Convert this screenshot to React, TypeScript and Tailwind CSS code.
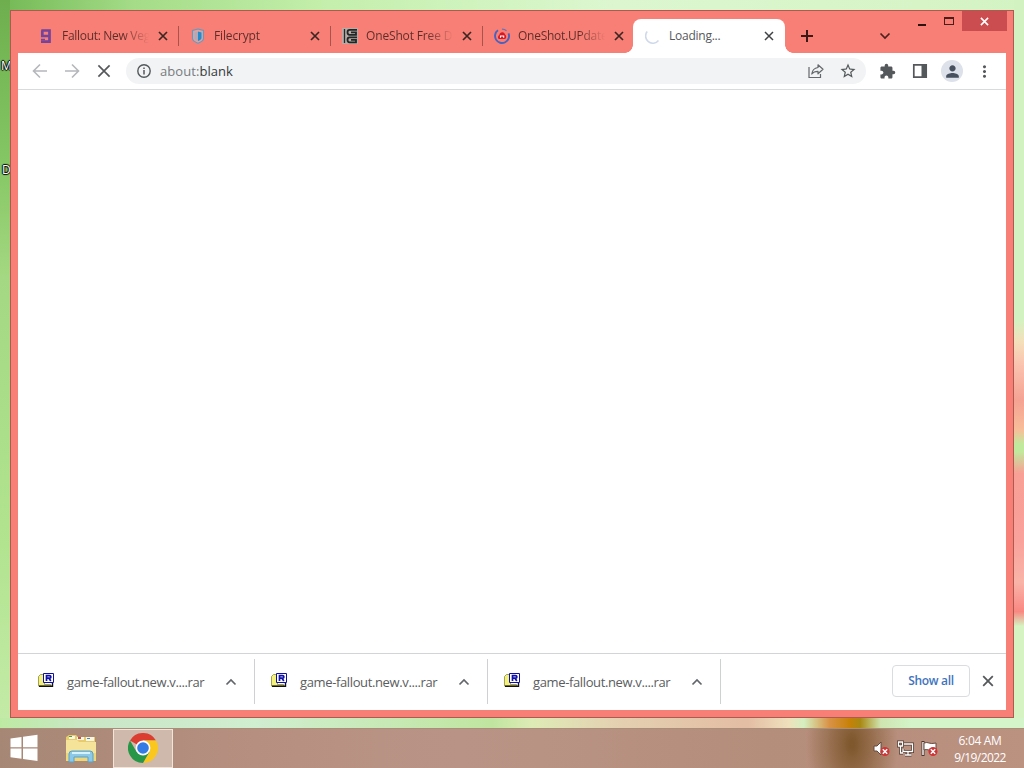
import type { ReactNode } from 'react'
import { MdExtension, MdPerson, MdMoreVert, MdStarBorder } from 'react-icons/md'

// ── Data ──

const TABS = [
  { title: 'Fallout: New Vegas', icon: <PurpleNineIcon />, tracking: 'tracking-[-0.3px]' },
  { title: 'Filecrypt', icon: <ShieldIcon />, tracking: 'tracking-[-0.15px]' },
  { title: 'OneShot Free Download', icon: <SteamGridIcon />, tracking: 'tracking-[-0.15px]' },
  { title: 'OneShot.UPdate.rar', icon: <UploadIcon />, tracking: 'tracking-[-0.25px]' },
]

const DOWNLOADS = ['game-fallout.new.v....rar', 'game-fallout.new.v....rar', 'game-fallout.new.v....rar']

// ── Favicons ──

function PurpleNineIcon() {
  return (
    <svg width="16" height="16" viewBox="0 0 16 16" className="block">
      <path d="M3.300 2.500H11.500V13.700H3M4.300 2.500V8H11.500" fill="none" stroke="#74439c" strokeWidth="2.700" />
      <path d="M3 11.500h4" fill="none" stroke="#74439c" strokeWidth="1.500" />
    </svg>
  )
}

function ShieldIcon() {
  return (
    <svg width="16" height="16" viewBox="0 0 16 16" className="block">
      <path d="M8 1 13.500 2.500v8C13.500 12.500 10.500 14.300 8 15.300 5.500 14.300 2.500 12.500 2.500 10.500v-8z" fill="#d9a3a1" stroke="#6798c0" strokeWidth="1.100" />
      <path d="M8 3.500 11.500 4.500v5.500c0 1.300-1.800 2.200-3.500 3z" fill="#218bd0" />
      <path d="M8 3.500 4.500 4.500v5.500c0 1.300 1.800 2.200 3.500 3z" fill="#b3a8b5" />
    </svg>
  )
}

function SteamGridIcon() {
  return (
    <svg width="16" height="16" viewBox="0 0 16 16" className="block">
      <path d="M0 0h16v16H0z" fill="#b9aaa5" />
      <path d="M2.500 1v14" stroke="#252b2b" strokeWidth="1.300" />
      <path d="M15 1.800H7.500Q5.500 1.800 5.500 4.300T7.500 6.800H14V4.300H9M15 9.300H7.500Q5.500 9.300 5.500 11.800t2 2.500H14V11.800H9" fill="none" stroke="#202626" strokeWidth="1.800" />
    </svg>
  )
}

function UploadIcon() {
  return (
    <svg width="16" height="16" viewBox="0 0 16 16" className="block">
      <path d="M4 2.300a7 7 0 1 0 10.500 3" fill="none" stroke="#4a62bd" strokeWidth="1.900" />
      <path d="M8 1.200a7 7 0 0 1 4.500 1.600" fill="none" stroke="#6372bd" strokeWidth="1.300" />
      <path d="M8.300 4.200c1.800 0 2.300 1.300 2.800 2.200 1.500.7 1.500 4.400-.5 4.600H5.500C3.500 10.800 3.600 7.800 5.300 6.900c.4-1.800 1.200-2.700 3-2.700z" fill="#d71925" />
      <path d="M6.500 9.700V8h3.200v1.700" fill="none" stroke="#fff" strokeWidth="1.100" />
    </svg>
  )
}

function SpinnerIcon() {
  return (
    <svg width="16" height="16" viewBox="0 0 16 16" className="block">
      <path d="M2.200 3.500A7 7 0 0 0 13.500 12.500" fill="none" stroke="#cfd9ea" strokeWidth="1.600" />
    </svg>
  )
}

// ── Small glyphs ──

function Cross({ size = 10, color = '#3c2523', weight = 1.7 }: { size?: number; color?: string; weight?: number }) {
  return (
    <svg width={size} height={size} viewBox="0 0 10 10" className="block shrink-0">
      <path d="M1 1l8 8M9 1l-8 8" stroke={color} strokeWidth={weight} fill="none" />
    </svg>
  )
}

function Arrow({ flip = false }: { flip?: boolean }) {
  return (
    <svg width="16" height="16" viewBox="0 0 16 16" className={flip ? 'block rotate-180' : 'block'}>
      <path d="M15 8H2M8 1.500 1.500 8 8 14.500" fill="none" stroke="#b5b7ba" strokeWidth="1.600" />
    </svg>
  )
}

function Chevron({ up = false, color }: { up?: boolean; color: string }) {
  return (
    <svg width="12" height="8" viewBox="0 0 12 8" className={up ? 'block rotate-180' : 'block'}>
      <path d="M1.500 1.500 6 6l4.500-4.500" fill="none" stroke={color} strokeWidth="1.700" />
    </svg>
  )
}

function RarIcon() {
  return (
    <svg width="16" height="16" viewBox="0 0 16 16" className="block shrink-0">
      <path d="M.5 4.500 2.500 2.500h4v10h6V14H.5z" fill="#f4f17c" stroke="#8a8a3c" strokeWidth=".8" />
      <path d="M1 14.200h13.500V11" fill="none" stroke="#111" strokeWidth="1.400" />
      <path d="M5.500 1.500h10v9h-10z" fill="#fff" stroke="#1010a0" strokeWidth="1" />
      <path d="M8.500 9V3.600h2.900q1.500 0 1.500 1.300t-1.500 1.300H8.500M11 6.300l1.800 2.700" fill="none" stroke="#1010b0" strokeWidth="1.700" />
    </svg>
  )
}

// ── Tab strip ──

function Tab({ title, icon, tracking }: { title: string; icon: ReactNode; tracking: string }) {
  return (
    <div className="flex h-[34px] w-[152px] shrink-0 items-center pl-[11px]">
      <div className="w-4 shrink-0">{icon}</div>
      <div className={`ml-2 w-[87px] overflow-hidden whitespace-nowrap bg-linear-to-r from-[#5c2c29] from-70% to-[#5c2c2900] bg-clip-text text-[12px] leading-5 text-transparent ${tracking}`}>
        {title}
      </div>
      <div className="ml-[9px]"><Cross /></div>
      <div className="ml-auto h-5 w-px bg-[#a9534d]" />
    </div>
  )
}

function TabStrip() {
  return (
    <div className="flex h-[42px] items-end pl-[9px]">
      {TABS.map((t, i) => (
        <div key={t.title} className={i === 3 ? 'w-[150px] shrink-0 overflow-hidden' : 'shrink-0'}>
          <Tab {...t} />
        </div>
      ))}
      <div className="relative flex h-[34px] w-[152px] shrink-0 items-center rounded-t-lg bg-white pl-3">
        <div className="absolute bottom-0 -left-2 size-2 bg-[radial-gradient(circle_at_0_0,#f77f75_7.5px,#fff_8px)]" />
        <div className="absolute -right-2 bottom-0 size-2 bg-[radial-gradient(circle_at_100%_0,#f77f75_7.5px,#fff_8px)]" />
        <SpinnerIcon />
        <span className="ml-2 w-[87px] text-[12px] leading-5 tracking-[-0.25px] text-[#55585b]">Loading...</span>
        <div className="ml-2"><Cross color="#3f4144" weight={1.500} /></div>
      </div>
      <div className="ml-[15px] flex h-[34px] items-center">
        <svg width="14" height="14" viewBox="0 0 14 14"><path d="M7 1v12M1 7h12" stroke="#3c1715" strokeWidth="2" /></svg>
      </div>
      <div className="ml-[65px] flex h-[34px] items-center"><Chevron color="#4f211e" /></div>
      <div className="-mr-px ml-auto flex self-start">
        <div className="flex h-5 w-[26px] items-end justify-center pb-[5px]"><div className="h-0.5 w-2 bg-[#2d1210]" /></div>
        <div className="flex h-5 w-[27px] items-center justify-center"><div className="h-2 w-[10px] border border-t-2 border-[#4a1d1a]" /></div>
        <div className="flex h-5 w-[45px] items-center justify-center bg-[#cb4d50]"><Cross size={9} color="#fff" weight={1.700} /></div>
      </div>
    </div>
  )
}

// ── Toolbar ──

function Toolbar() {
  return (
    <div className="flex h-[37px] shrink-0 items-center border-b border-[#d9dadb]">
      <div className="ml-[14px]"><Arrow /></div>
      <div className="ml-4"><Arrow flip /></div>
      <div className="ml-[17px]"><Cross size={14} color="#55585b" weight={1.200} /></div>
      <div className="ml-[15px] flex h-[26px] w-[740px] items-center rounded-full bg-[#f1f3f4] pr-[9px] pl-[11px]">
        <svg width="14" height="14" viewBox="0 0 14 14">
          <circle cx="7" cy="7" r="6.200" fill="none" stroke="#55585b" strokeWidth="1.400" />
          <path d="M7 6v4.500M7 3.500V5" stroke="#55585b" strokeWidth="1.500" />
        </svg>
        <span className="ml-[9px] text-[13px] leading-5 tracking-[0.06px] text-[#777b80]">about:<span className="text-[#36393c]">blank</span></span>
        <svg className="ml-auto" width="16" height="16" viewBox="0 0 16 16" fill="none" stroke="#64676b" strokeWidth="1.200">
          <path d="M1 4v10.500h11.500V11" />
          <path d="M10 1.800 15 6.300l-5 4.500V8.300C7 8.300 5.200 9 3.800 11c.4-3.200 2.500-6 6.200-6.500z" strokeLinejoin="round" />
        </svg>
        <MdStarBorder className="ml-[15px]" size={18} color="#55585b" />
      </div>
      <MdExtension className="ml-[13px]" size={17} color="#55585b" />
      <svg className="ml-4" width="16" height="16" viewBox="0 0 16 16">
        <path d="M1.800 1.800h12.400v12.400H1.800z" fill="none" stroke="#55585b" strokeWidth="1.700" />
        <path d="M9.500 1h5.500v14H9.500z" fill="#55585b" />
      </svg>
      <div className="ml-[13px] flex size-[22px] items-center justify-center rounded-full bg-[#dde1e9]"><MdPerson size={19} color="#47505f" /></div>
      <MdMoreVert className="ml-3" size={19} color="#55585b" />
    </div>
  )
}

// ── Download shelf ──

function DownloadShelf() {
  return (
    <div className="flex h-[57px] shrink-0 items-center border-t border-[#d3d4d5]">
      {DOWNLOADS.map((name, i) => (
        <div key={i} className={`-mt-px flex h-[45px] items-center border-r border-[#cfd0d1] ${i === 0 ? 'w-[237px] pl-5' : 'w-[233px] pl-4'}`}>
          <div className="-mt-1"><RarIcon /></div>
          <span className="mt-px ml-[13px] w-[138px] text-[13px] leading-5 tracking-[-0.37px] whitespace-nowrap text-[#5a5d60]">{name}</span>
          <div className="mt-px ml-5"><Chevron up color="#626569" /></div>
        </div>
      ))}
      <button className="mb-0.5 ml-auto flex h-8 w-[78px] items-center justify-center rounded border border-[#dadce0] text-[12px] font-semibold tracking-[-0.35px] text-[#3f74bd]">Show all</button>
      <div className="mr-3 mb-0.5 ml-3"><Cross size={12} color="#55585b" weight={1.500} /></div>
    </div>
  )
}

// ── Taskbar ──

function FolderIcon() {
  return (
    <svg width="32" height="30" viewBox="0 0 32 30">
      <path d="M1 3 4 1h7l2 2h17v23H1z" fill="#e7cb6c" />
      <path d="M4 2h6v3H4zM12 3h7v3h-7zM21 3h8v4h-8z" fill="#f8f6df" />
      <path d="M4 2h3v1H4z" fill="#4d9a45" /><path d="M13 3h3v2h-3z" fill="#cc5147" /><path d="M22 4h3v1h-3z" fill="#468dc4" />
      <path d="M1 6h11l2 2h17v19H1z" fill="#f5e39a" />
      <path d="M1 19h30v8H1z" fill="#edd779" />
      <path d="M4 28v-8q0-3 3-3h18q3 0 3 3v8h-5v-5H9v5z" fill="#8cc8e8" stroke="#57a2ce" />
      <path d="M7 19h18" stroke="#d6f2fc" strokeWidth="2" />
    </svg>
  )
}

function ChromeIcon() {
  return (
    <svg width="30" height="30" viewBox="0 0 30 30">
      <path d="M15 15 2 7.500A15 15 0 0 1 28 7.500H15z" fill="#dc3d31" />
      <path d="M15 15 28 7.500A15 15 0 0 1 15 30l6.500-11.200z" fill="#fac71e" />
      <path d="M15 15v0l6.500 3.800L15 30A15 15 0 0 1 2 7.500l6.500 11.300z" fill="#289647" />
      <path d="M15 7.500h13L21.500 18.800z" fill="#fac71e" />
      <circle cx="15" cy="15" r="7.400" fill="#fff" />
      <circle cx="15" cy="15" r="5.800" fill="#347be5" />
    </svg>
  )
}

function ErrorBadge() {
  return (
    <g>
      <circle cx="12" cy="11.500" r="4.500" fill="#cf3536" />
      <path d="m9.800 9.300 4.400 4.400m0-4.400-4.400 4.400" stroke="#fff" strokeWidth="1.500" />
    </g>
  )
}

function Taskbar() {
  return (
    <div className="flex h-10 items-center border-t border-[#a88f7a] bg-[radial-gradient(ellipse_46px_80px_at_852px_15px,#80582e_5%,#80582e00),linear-gradient(90deg,#a68775,#b78f80_25%,#b99486_45%,#b58d7b_75%,#bb9180)]">
      <svg className="mb-0.5 ml-[10px]" width="28" height="28" viewBox="0 0 28 28" fill="#fff">
        <path d="M.5 4.500 11.500 3v10.200H.5zM13 2.700 27.500.8v12.400H13zM.5 14.600h11v10.200L.5 23.300zM13 14.600h14.500V27L13 25.100z" />
      </svg>
      <div className="ml-[27px]"><FolderIcon /></div>
      <div className="ml-4 flex h-[39px] w-[60px] items-center justify-center border border-[#f1e4db] bg-[#cfb9ad] pb-px"><ChromeIcon /></div>
      <div className="ml-auto flex items-center gap-[7px]">
        <svg width="17" height="17" viewBox="0 0 17 17">
          <path d="M1 6h3l4-4v13l-4-4H1z" fill="#fff" stroke="#65483d" />
          <ErrorBadge />
        </svg>
        <svg width="17" height="17" viewBox="0 0 17 17" fill="none">
          <path d="M7 4h8.500v7.500H6V9M11 11.500V15M8 15h6.500M1.500 2h4v4h-4zM3.500 6v7H6" stroke="#4b352c" strokeWidth="2.800" />
          <path d="M7 4h8.500v7.500H6V9M11 11.500V15M8 15h6.500M1.500 2h4v4h-4zM3.500 6v7H6" stroke="#fff" strokeWidth="1.300" />
        </svg>
        <svg width="17" height="17" viewBox="0 0 17 17">
          <path d="M2 1v15" stroke="#4b352c" strokeWidth="3" />
          <path d="M2 2v13" stroke="#fff" strokeWidth="1.400" />
          <path d="M3 3q3-1 5 0t7 0v7q-4 1-7 0t-5 0z" fill="#fff" stroke="#65483d" />
          <ErrorBadge />
        </svg>
      </div>
      <div className="mr-[13px] ml-[11px] w-[62px] text-center text-[12px] leading-[17px] text-white">
        <div className="tracking-[-0.35px]">6:04 AM</div>
        <div className="tracking-[-0.6px]">9/19/2022</div>
      </div>
    </div>
  )
}

// ── Desktop ──

export default function App() {
  return (
    <div className="flex h-[768px] w-[1024px] flex-col overflow-hidden bg-[#d5f3c5] font-['Open_Sans','Noto_Sans',sans-serif]">
      <div className="relative flex-1 bg-[linear-gradient(90deg,#73b855,#a4dc87_13%,#c4efac_32%,#dcf7d0_60%,#d4f3c3)]">
        {/* wallpaper showing around the window */}
        <div className="absolute top-0 left-0 h-[728px] w-[10px] bg-[linear-gradient(#6eae4e,#84c663_22%,#a4d882_38%,#b2e490_75%,#c4eba8)]" />
        <div className="absolute top-0 right-0 h-[728px] w-[10px] bg-[linear-gradient(#d3f2c1_0,#d3f2c1_44%,#f4dfba_47%,#fac4af_50%,#f5a293_55%,#f8bd99_59%,#c1e99d_61%,#c1e99d_62%,#f8a095_65%,#f9a19b_74%,#f9b4a8_80%,#f98882_84%,#d5f3c3_86%)]" />
        <div className="absolute right-0 bottom-0 left-0 h-[10px] bg-[linear-gradient(90deg,#bdeaa3,#c9e7c5_8%,#d0eed0_25%,#c0e5a0_48%,#deebb6_52%,#e4d1b2_60%,#e3bda4_73%,#efe1bc_77%,#d5efc0_78.5%,#d99245_81%,#c68108_83%,#a98813_84%,#cfe4b0_86%,#d3f5c9_89%)]" />
        <span className="absolute top-[58px] left-[1px] text-[12px] leading-4 text-white [text-shadow:1px_0_1px_#000,-1px_0_1px_#000,0_1px_1px_#000,0_-1px_1px_#000]">M</span>
        <span className="absolute top-[162px] left-[2px] text-[12px] leading-4 text-white [text-shadow:1px_0_1px_#000,-1px_0_1px_#000,0_1px_1px_#000,0_-1px_1px_#000]">D</span>

        <div className="absolute top-[10px] left-[10px] flex h-[708px] w-[1004px] flex-col border border-[#ad5b50] bg-[#f77f75] px-[7px] pb-[7px]">
          <TabStrip />
          <div className="flex min-h-0 flex-1 flex-col bg-white">
            <Toolbar />
            <div className="flex-1" />
            <DownloadShelf />
          </div>
        </div>
      </div>
      <Taskbar />
    </div>
  )
}
